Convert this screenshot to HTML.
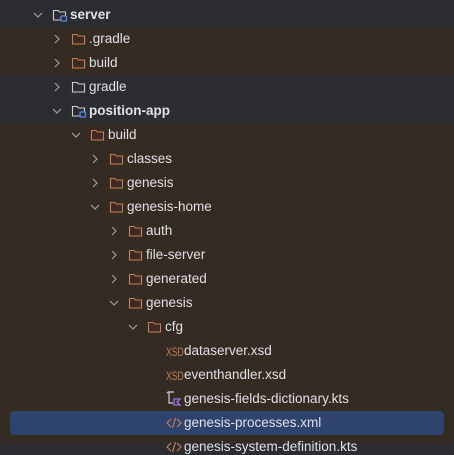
<!DOCTYPE html>
<html><head><style>
body{margin:0;width:454px;height:443px;overflow:hidden;background:#2b2d30;font-family:"Liberation Sans",sans-serif;font-size:13.5px;color:#dfe1e5;position:relative}
.r{position:absolute;left:0;width:454px;height:24px}
.b{background:#342b22}
.g{background:#2b2d30}
.t{position:absolute;top:4px;line-height:16px;white-space:nowrap}
.bold{font-weight:bold}
svg{position:absolute}
.sel{position:absolute;left:10px;top:411px;width:434px;height:24px;background:#2e436e;border-radius:4px}
.xsd{position:absolute;font-size:12px;line-height:12px;color:#c77d55;transform:scaleX(0.72);transform-origin:0 0}
</style></head><body>
<div class="r g" style="top:0;height:27px"></div>
<div class="r b" style="top:27px;height:48px"></div>
<div class="r g" style="top:75px;height:48px"></div>
<div class="r b" style="top:123px;height:320px"></div>
<div class="sel"></div>
<div id="c"></div>
<script>
const rows=[
[0,'v','fb','server',1],[1,'>','fo','.gradle'],[1,'>','fo','build'],[1,'>','fg','gradle'],[1,'v','fb','position-app',1],
[2,'v','fo','build'],[3,'>','fo','classes'],[3,'>','fo','genesis'],[3,'v','fo','genesis-home'],
[4,'>','fo','auth'],[4,'>','fo','file-server'],[4,'>','fo','generated'],[4,'v','fo','genesis'],
[5,'v','fo','cfg'],[6,'','xsd','dataserver.xsd'],[6,'','xsd','eventhandler.xsd'],[6,'','kts','genesis-fields-dictionary.kts'],[6,'','xml','genesis-processes.xml'],[6,'','xml','genesis-system-definition.kts']];
let h='';
rows.forEach((r,i)=>{
 const top=3+24*i, x=38+19*r[0];
 if(r[1]=='>') h+=`<svg style="left:${x-4}px;top:${top+7}px" width="8" height="10"><path d="M2 1l4 4-4 4" stroke="#9da0a8" stroke-width="1.2" fill="none"/></svg>`;
 if(r[1]=='v') h+=`<svg style="left:${x-5}px;top:${top+8}px" width="10" height="8"><path d="M1 2l4 4 4-4" stroke="#9da0a8" stroke-width="1.2" fill="none"/></svg>`;
 const fx=x+14; let tx=x+32;
 if(r[2][0]=='f'){
  const col=r[2]=='fo'?'#c77d55':'#ced0d6';
  h+=`<svg style="left:${fx}px;top:${top+5}px" width="16" height="14"><path d="M1.5 2.5h4.5l1.5 1.5h6v8h-12z" stroke="${col}" stroke-width="1.1" fill="${r[2]=='fo'?'#3d2a22':'none'}"/>${r[2]=='fb'?'<rect x="9" y="8" width="5.5" height="5" rx="1" stroke="#548af7" stroke-width="1.3" fill="#2b2d30"/>':''}</svg>`;
 } else {
  tx=184; const ix=166;
  if(r[2]=='xsd') h+=`<div class="xsd" style="left:${ix}px;top:${top+7}px">XSD</div>`;
  if(r[2]=='kts') h+=`<svg style="left:${ix}px;top:${top+3}px" width="16" height="18"><path d="M2 2h6M3 2v11h4" stroke="#ced0d6" stroke-width="1.2" fill="none"/><path d="M8 9h6l-3 3 3 3h-6z" stroke="#a571e6" stroke-width="1.3" fill="none"/><path d="M1 3.5a1.5 1.5 0 0 1 2-1.5" stroke="#ced0d6" fill="none"/></svg>`;
  if(r[2]=='xml') h+=`<svg style="left:${ix}px;top:${top+5}px" width="16" height="14"><path d="M5 3L1 7l4 4M11 3l4 4-4 4M9.5 2l-3 10" stroke="#c77d55" stroke-width="1.2" fill="none"/></svg>`;
 }
 h+=`<div class="t${r[4]?' bold':''}" style="left:${tx}px;top:${top+4}px">${r[3]}</div>`;
});
document.getElementById('c').innerHTML=h;
</script>
</body></html>
